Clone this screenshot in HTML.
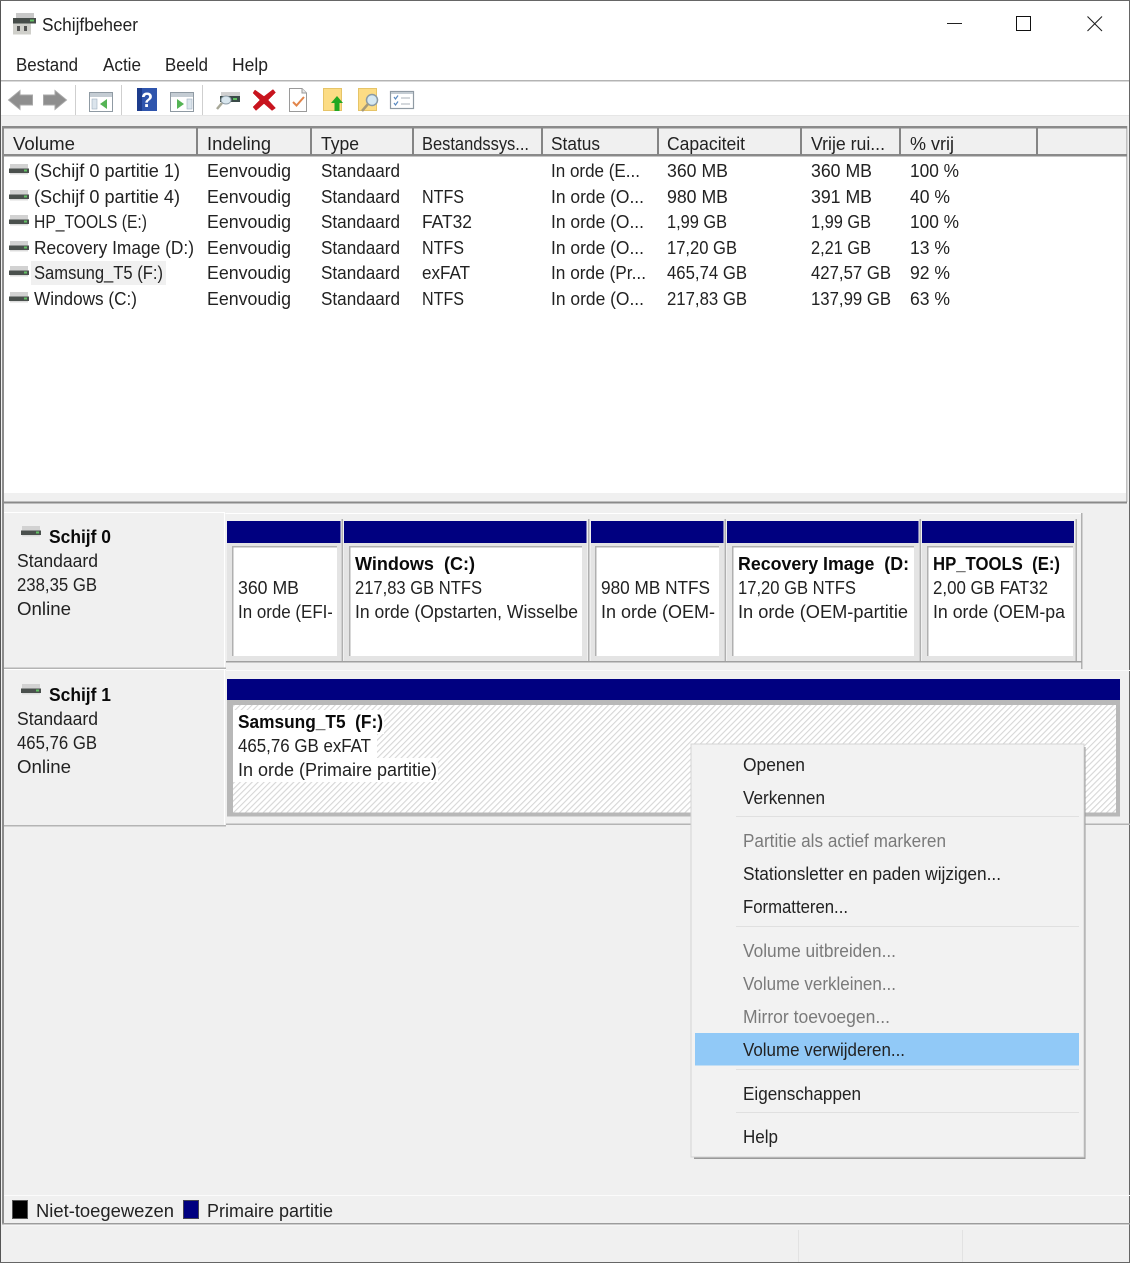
<!DOCTYPE html>
<html lang="nl"><head><meta charset="utf-8"><title>Schijfbeheer</title>
<style>
html,body{margin:0;padding:0;background:#f0f0f0;width:1130px;height:1263px;overflow:hidden}
svg{display:block}
text{font-family:"Liberation Sans",sans-serif;font-size:18px;fill:#222}
.b{font-weight:bold;fill:#0a0a0a}
.g{fill:#7a7a7a}
</style></head><body>
<svg width="1130" height="1263" viewBox="0 0 1130 1263" xmlns="http://www.w3.org/2000/svg">
<defs>
<pattern id="h" width="4.200" height="4.200" patternUnits="userSpaceOnUse" patternTransform="rotate(45)">
<rect width="4.200" height="4.200" fill="#fff"/><rect width="1.100" height="4.200" fill="#d6d6d6"/>
</pattern>
<g id="drv">
<rect x="1" y="0" width="18" height="5" fill="#d2d2d2"/>
<rect x="0" y="4.500" width="20" height="4.500" fill="#4a504d"/>
<rect x="15" y="5.500" width="3" height="2" fill="#62c064"/>
<rect x="1" y="9" width="18" height="1.500" fill="#dcdcdc"/>
</g>
<clipPath id="c1"><rect x="234" y="548" width="98" height="108"/></clipPath>
<clipPath id="c2"><rect x="351" y="548" width="227" height="108"/></clipPath>
<clipPath id="c3"><rect x="597" y="548" width="118" height="108"/></clipPath>
<clipPath id="c4"><rect x="734" y="548" width="175" height="108"/></clipPath>
<clipPath id="c5"><rect x="929" y="548" width="137" height="108"/></clipPath>
</defs>

<!-- window -->
<rect width="1130" height="1263" fill="#f0f0f0"/>
<rect width="1130" height="116" fill="#fff"/>
<rect x="0" y="80" width="1130" height="1.500" fill="#b4b4b4"/>
<rect x="0" y="115" width="1130" height="1" fill="#e6e6e6"/>

<!-- title -->
<g>
<rect x="16" y="13" width="18" height="5" fill="#c8c8c8"/>
<rect x="13" y="18" width="23" height="5.500" fill="#464c49"/>
<rect x="30" y="19.500" width="4" height="2" fill="#62c064"/>
<rect x="13" y="23.500" width="18" height="11" fill="#cfcfca"/>
<rect x="17" y="26" width="3" height="5" fill="#555"/>
<rect x="24" y="26" width="3" height="5" fill="#555"/>
</g>
<text x="42" y="31" textLength="96" lengthAdjust="spacingAndGlyphs">Schijfbeheer</text>
<rect x="947" y="23" width="15" height="1" fill="#222"/>
<rect x="1016.500" y="16.500" width="14" height="14" fill="none" stroke="#111" stroke-width="1"/>
<path d="M1087.500 16.500L1102 31M1102 16.500L1087.500 31" stroke="#222" stroke-width="1.100" fill="none"/>

<!-- menu -->
<text x="16" y="71" textLength="62" lengthAdjust="spacingAndGlyphs">Bestand</text>
<text x="103" y="71" textLength="38" lengthAdjust="spacingAndGlyphs">Actie</text>
<text x="165" y="71" textLength="43" lengthAdjust="spacingAndGlyphs">Beeld</text>
<text x="232" y="71" textLength="36" lengthAdjust="spacingAndGlyphs">Help</text>

<!-- toolbar -->
<path d="M8.500 100L20 90.500V95H32.500V105H20V109.500Z" fill="#8e8e8e" stroke="#a8a8a8"/>
<path d="M66.500 100L55 90.500V95H43.500V105H55V109.500Z" fill="#8e8e8e" stroke="#a8a8a8"/>
<rect x="75" y="85" width="1" height="30" fill="#cfcfcf"/>
<g>
<rect x="89.500" y="92.500" width="23" height="19" fill="#fff" stroke="#8f9aa3"/>
<rect x="90" y="93" width="22" height="4" fill="#c4ccd3"/>
<rect x="92" y="99" width="5" height="10" fill="#dbe4ec" stroke="#9fb0c0" stroke-width=".6"/>
<path d="M107 99V109L100 104Z" fill="#55b455"/>
</g>
<rect x="121" y="85" width="1" height="30" fill="#cfcfcf"/>
<rect x="137" y="88" width="20" height="23" fill="#2f55ad"/>
<rect x="137" y="88" width="5" height="23" fill="#1d3c8c"/>
<text x="141" y="107" style="font-size:21px;font-weight:bold;fill:#fff" textLength="12" lengthAdjust="spacingAndGlyphs">?</text>
<g>
<rect x="170.500" y="92.500" width="23" height="19" fill="#fff" stroke="#8f9aa3"/>
<rect x="171" y="93" width="22" height="4" fill="#c4ccd3"/>
<rect x="187" y="99" width="5" height="10" fill="#dbe4ec" stroke="#9fb0c0" stroke-width=".6"/>
<path d="M177 99V109L184 104Z" fill="#55b455"/>
</g>
<rect x="202" y="85" width="1" height="30" fill="#cfcfcf"/>
<g>
<rect x="221" y="92" width="19" height="4" fill="#d0d0d0"/>
<rect x="220" y="96" width="20" height="6" fill="#3a4a48"/>
<rect x="233" y="98" width="4" height="2" fill="#5fc060"/>
<ellipse cx="226" cy="100" rx="5" ry="4" fill="#d8e6ee" stroke="#8a9aa5"/>
<path d="M222 103L217 109" stroke="#a8a898" stroke-width="2.500"/>
</g>
<path d="M255 90L264 96.500L273 89.500L275.500 92.500L268 100L275.500 108L272 110.500L264 103.500L256 110.500L253 107L260 100L253 93Z" fill="#c8141e" stroke="#c8141e" stroke-width=".5"/>
<g>
<path d="M289.500 88.500H302L306.500 93V111.500H289.500Z" fill="#fff" stroke="#9a9a9a"/>
<path d="M302 88.500V93H306.500" fill="#e8e8e8" stroke="#9a9a9a"/>
<path d="M293 102L296.500 105.500L304 97" fill="none" stroke="#e2854a" stroke-width="2"/>
</g>
<g>
<rect x="323.500" y="88.500" width="18" height="22" fill="#fcdc84" stroke="#e6c468"/>
<path d="M337 96L343 103H339.500V111H334.500V103H331Z" fill="#22a822"/>
</g>
<g>
<rect x="358.500" y="88.500" width="18" height="22" fill="#fcdc84" stroke="#e6c468"/>
<circle cx="372" cy="100" r="5.500" fill="#d5e8f2" stroke="#8a9aa5" stroke-width="1.500"/>
<path d="M368 104L362 111" stroke="#a69a78" stroke-width="2.500"/>
</g>
<g>
<rect x="390.500" y="91.500" width="23" height="17" fill="#fff" stroke="#8f9aa3" stroke-width="1.200"/>
<rect x="391" y="92" width="22" height="2" fill="#c4ccd3"/>
<path d="M394 97L395.500 99L398 95.500M394 103L395.500 105L398 101.500" stroke="#5a8ac0" stroke-width="1.200" fill="none"/>
<path d="M401 98H410M401 104H410" stroke="#a8b0b8" stroke-width="1"/>
</g>

<!-- frame left -->
<rect x="2" y="126" width="2" height="1097" fill="#8c8c8c"/>
<rect x="0" y="0" width="1" height="1263" fill="#555"/>
<rect x="1129" y="0" width="1" height="1263" fill="#666"/>
<rect x="0" y="0" width="1130" height="1" fill="#666"/>
<rect x="0" y="1262" width="1130" height="1" fill="#666"/>

<!-- list -->
<rect x="4" y="156" width="1122" height="337" fill="#fff"/>
<rect x="1126" y="126" width="1.500" height="376" fill="#c0c0c0"/>
<rect x="4" y="128" width="1122" height="27" fill="#f0f0f0"/>
<rect x="3" y="126" width="1124" height="2.500" fill="#8a8a8a"/>
<text x="13" y="150" textLength="62" lengthAdjust="spacingAndGlyphs">Volume</text>
<text x="207" y="150" textLength="64" lengthAdjust="spacingAndGlyphs">Indeling</text>
<text x="321" y="150" textLength="38" lengthAdjust="spacingAndGlyphs">Type</text>
<text x="422" y="150" textLength="107" lengthAdjust="spacingAndGlyphs">Bestandssys...</text>
<text x="551" y="150" textLength="49" lengthAdjust="spacingAndGlyphs">Status</text>
<text x="667" y="150" textLength="78" lengthAdjust="spacingAndGlyphs">Capaciteit</text>
<text x="811" y="150" textLength="74" lengthAdjust="spacingAndGlyphs">Vrije rui...</text>
<text x="910" y="150" textLength="44" lengthAdjust="spacingAndGlyphs">% vrij</text>
<rect x="3" y="154" width="1124" height="2.500" fill="#8a8a8a"/>
<g fill="#858585">
<rect x="196" y="128" width="2" height="27"/><rect x="310" y="128" width="2" height="27"/><rect x="412" y="128" width="2" height="27"/><rect x="541" y="128" width="2" height="27"/><rect x="657" y="128" width="2" height="27"/><rect x="800" y="128" width="2" height="27"/><rect x="899" y="128" width="2" height="27"/><rect x="1036" y="128" width="2" height="27"/>
</g>

<rect x="31" y="261" width="135" height="24" fill="#f0f0f0"/>
<use href="#drv" x="9" y="164"/><use href="#drv" x="9" y="190"/><use href="#drv" x="9" y="215"/><use href="#drv" x="9" y="241"/><use href="#drv" x="9" y="266"/><use href="#drv" x="9" y="292"/>

<text x="34" y="177" textLength="146" lengthAdjust="spacingAndGlyphs">(Schijf 0 partitie 1)</text>
<text x="34" y="203" textLength="146" lengthAdjust="spacingAndGlyphs">(Schijf 0 partitie 4)</text>
<text x="34" y="228" textLength="113" lengthAdjust="spacingAndGlyphs">HP_TOOLS (E:)</text>
<text x="34" y="254" textLength="160" lengthAdjust="spacingAndGlyphs">Recovery Image (D:)</text>
<text x="34" y="279" textLength="129" lengthAdjust="spacingAndGlyphs">Samsung_T5 (F:)</text>
<text x="34" y="305" textLength="103" lengthAdjust="spacingAndGlyphs">Windows (C:)</text>
<g>
<text x="207" y="177" textLength="84" lengthAdjust="spacingAndGlyphs">Eenvoudig</text>
<text x="207" y="203" textLength="84" lengthAdjust="spacingAndGlyphs">Eenvoudig</text>
<text x="207" y="228" textLength="84" lengthAdjust="spacingAndGlyphs">Eenvoudig</text>
<text x="207" y="254" textLength="84" lengthAdjust="spacingAndGlyphs">Eenvoudig</text>
<text x="207" y="279" textLength="84" lengthAdjust="spacingAndGlyphs">Eenvoudig</text>
<text x="207" y="305" textLength="84" lengthAdjust="spacingAndGlyphs">Eenvoudig</text>
<text x="321" y="177" textLength="79" lengthAdjust="spacingAndGlyphs">Standaard</text>
<text x="321" y="203" textLength="79" lengthAdjust="spacingAndGlyphs">Standaard</text>
<text x="321" y="228" textLength="79" lengthAdjust="spacingAndGlyphs">Standaard</text>
<text x="321" y="254" textLength="79" lengthAdjust="spacingAndGlyphs">Standaard</text>
<text x="321" y="279" textLength="79" lengthAdjust="spacingAndGlyphs">Standaard</text>
<text x="321" y="305" textLength="79" lengthAdjust="spacingAndGlyphs">Standaard</text>
<text x="422" y="203" textLength="42" lengthAdjust="spacingAndGlyphs">NTFS</text>
<text x="422" y="228" textLength="50" lengthAdjust="spacingAndGlyphs">FAT32</text>
<text x="422" y="254" textLength="42" lengthAdjust="spacingAndGlyphs">NTFS</text>
<text x="422" y="279" textLength="48" lengthAdjust="spacingAndGlyphs">exFAT</text>
<text x="422" y="305" textLength="42" lengthAdjust="spacingAndGlyphs">NTFS</text>
<text x="551" y="177" textLength="89" lengthAdjust="spacingAndGlyphs">In orde (E...</text>
<text x="551" y="203" textLength="93" lengthAdjust="spacingAndGlyphs">In orde (O...</text>
<text x="551" y="228" textLength="93" lengthAdjust="spacingAndGlyphs">In orde (O...</text>
<text x="551" y="254" textLength="93" lengthAdjust="spacingAndGlyphs">In orde (O...</text>
<text x="551" y="279" textLength="95" lengthAdjust="spacingAndGlyphs">In orde (Pr...</text>
<text x="551" y="305" textLength="93" lengthAdjust="spacingAndGlyphs">In orde (O...</text>
<text x="667" y="177" textLength="61" lengthAdjust="spacingAndGlyphs">360 MB</text>
<text x="667" y="203" textLength="61" lengthAdjust="spacingAndGlyphs">980 MB</text>
<text x="667" y="228" textLength="60" lengthAdjust="spacingAndGlyphs">1,99 GB</text>
<text x="667" y="254" textLength="70" lengthAdjust="spacingAndGlyphs">17,20 GB</text>
<text x="667" y="279" textLength="80" lengthAdjust="spacingAndGlyphs">465,74 GB</text>
<text x="667" y="305" textLength="80" lengthAdjust="spacingAndGlyphs">217,83 GB</text>
<text x="811" y="177" textLength="61" lengthAdjust="spacingAndGlyphs">360 MB</text>
<text x="811" y="203" textLength="61" lengthAdjust="spacingAndGlyphs">391 MB</text>
<text x="811" y="228" textLength="60" lengthAdjust="spacingAndGlyphs">1,99 GB</text>
<text x="811" y="254" textLength="60" lengthAdjust="spacingAndGlyphs">2,21 GB</text>
<text x="811" y="279" textLength="80" lengthAdjust="spacingAndGlyphs">427,57 GB</text>
<text x="811" y="305" textLength="80" lengthAdjust="spacingAndGlyphs">137,99 GB</text>
<text x="910" y="177" textLength="49" lengthAdjust="spacingAndGlyphs">100 %</text>
<text x="910" y="203" textLength="40" lengthAdjust="spacingAndGlyphs">40 %</text>
<text x="910" y="228" textLength="49" lengthAdjust="spacingAndGlyphs">100 %</text>
<text x="910" y="254" textLength="40" lengthAdjust="spacingAndGlyphs">13 %</text>
<text x="910" y="279" textLength="40" lengthAdjust="spacingAndGlyphs">92 %</text>
<text x="910" y="305" textLength="40" lengthAdjust="spacingAndGlyphs">63 %</text>
</g>

<!-- splitter -->
<rect x="4" y="501.500" width="1123" height="2" fill="#8a8a8a"/>

<!-- disk 0 -->
<rect x="4" y="512" width="220" height="1" fill="#fff"/>
<rect x="224" y="512" width="1" height="157" fill="#fff"/>
<rect x="4" y="667.500" width="222" height="1.500" fill="#b4b4b4"/>
<use href="#drv" x="21" y="526"/>
<text x="49" y="543" class="b" textLength="62" lengthAdjust="spacingAndGlyphs">Schijf 0</text>
<text x="17" y="567" textLength="81" lengthAdjust="spacingAndGlyphs">Standaard</text>
<text x="17" y="591" textLength="80" lengthAdjust="spacingAndGlyphs">238,35 GB</text>
<text x="17" y="615" textLength="54" lengthAdjust="spacingAndGlyphs">Online</text>

<rect x="225.500" y="513" width="856" height="1" fill="#fff"/>
<rect x="1081" y="513" width="1.500" height="156" fill="#b0b0b0"/>
<rect x="226" y="661" width="856" height="1.500" fill="#a0a0a0"/>
<!-- partition cells -->
<g fill="#e4e4e4">
<rect x="227" y="543" width="114" height="118"/><rect x="344" y="543" width="243" height="118"/><rect x="591" y="543" width="133" height="118"/><rect x="727" y="543" width="192" height="118"/><rect x="922" y="543" width="154" height="118"/>
</g>
<g fill="#000080">
<rect x="227" y="521" width="113.500" height="22"/><rect x="344" y="521" width="242.500" height="22"/><rect x="591" y="521" width="132.500" height="22"/><rect x="727" y="521" width="191.500" height="22"/><rect x="922" y="521" width="152" height="22"/>
</g>
<g fill="#b0b0b0">
<rect x="341.500" y="519" width="1.500" height="142"/><rect x="588" y="519" width="1.500" height="142"/><rect x="724.500" y="519" width="1.500" height="142"/><rect x="919.500" y="519" width="1.500" height="142"/><rect x="1075.500" y="519" width="1.500" height="142"/>
</g>
<g fill="#fff">
<rect x="232" y="546" width="105" height="110"/><rect x="349" y="546" width="233" height="110"/><rect x="595" y="546" width="124" height="110"/><rect x="732" y="546" width="182" height="110"/><rect x="927" y="546" width="146" height="110"/>
</g>
<g fill="#b0b0b0">
<rect x="232" y="546" width="105" height="1.500"/><rect x="349" y="546" width="233" height="1.500"/><rect x="595" y="546" width="124" height="1.500"/><rect x="732" y="546" width="182" height="1.500"/><rect x="927" y="546" width="146" height="1.500"/>
<rect x="232" y="546" width="1.500" height="110"/><rect x="349" y="546" width="1.500" height="110"/><rect x="595" y="546" width="1.500" height="110"/><rect x="732" y="546" width="1.500" height="110"/><rect x="927" y="546" width="1.500" height="110"/>
</g>
<g clip-path="url(#c1)">
<text x="238" y="594" textLength="61" lengthAdjust="spacingAndGlyphs">360 MB</text>
<text x="238" y="618" textLength="95" lengthAdjust="spacingAndGlyphs">In orde (EFI-</text>
</g>
<g clip-path="url(#c2)">
<text x="355" y="570" class="b" textLength="120" lengthAdjust="spacingAndGlyphs">Windows&#160;&#160;(C:)</text>
<text x="355" y="594" textLength="127" lengthAdjust="spacingAndGlyphs">217,83 GB NTFS</text>
<text x="355" y="618" textLength="223" lengthAdjust="spacingAndGlyphs">In orde (Opstarten, Wisselbe</text>
</g>
<g clip-path="url(#c3)">
<text x="601" y="594" textLength="109" lengthAdjust="spacingAndGlyphs">980 MB NTFS</text>
<text x="601" y="618" textLength="114" lengthAdjust="spacingAndGlyphs">In orde (OEM-</text>
</g>
<g clip-path="url(#c4)">
<text x="738" y="570" class="b" textLength="171" lengthAdjust="spacingAndGlyphs">Recovery Image&#160;&#160;(D:</text>
<text x="738" y="594" textLength="118" lengthAdjust="spacingAndGlyphs">17,20 GB NTFS</text>
<text x="738" y="618" textLength="170" lengthAdjust="spacingAndGlyphs">In orde (OEM-partitie</text>
</g>
<g clip-path="url(#c5)">
<text x="933" y="570" class="b" textLength="127" lengthAdjust="spacingAndGlyphs">HP_TOOLS&#160;&#160;(E:)</text>
<text x="933" y="594" textLength="115" lengthAdjust="spacingAndGlyphs">2,00 GB FAT32</text>
<text x="933" y="618" textLength="132" lengthAdjust="spacingAndGlyphs">In orde (OEM-pa</text>
</g>

<!-- disk 1 -->
<rect x="4" y="669" width="222" height="1" fill="#fff"/>
<rect x="224" y="670" width="1" height="156" fill="#fff"/>
<rect x="4" y="825" width="222" height="1.500" fill="#b4b4b4"/>
<rect x="226" y="823.500" width="904" height="1.500" fill="#b4b4b4"/>
<use href="#drv" x="21" y="684"/>
<text x="49" y="701" class="b" textLength="62" lengthAdjust="spacingAndGlyphs">Schijf 1</text>
<text x="17" y="725" textLength="81" lengthAdjust="spacingAndGlyphs">Standaard</text>
<text x="17" y="749" textLength="80" lengthAdjust="spacingAndGlyphs">465,76 GB</text>
<text x="17" y="773" textLength="54" lengthAdjust="spacingAndGlyphs">Online</text>
<rect x="226" y="670" width="904" height="1" fill="#fafafa"/>
<rect x="227" y="679" width="893" height="21" fill="#000080"/>
<rect x="227" y="700" width="893" height="116.500" fill="#b8b8b8"/>
<rect x="233" y="705" width="883" height="107.500" fill="url(#h)"/>
<rect x="233" y="710" width="151" height="24" fill="#fff"/>
<rect x="233" y="734" width="144" height="24" fill="#fff"/>
<rect x="233" y="758" width="205" height="24" fill="#fff"/>
<text x="238" y="728" class="b" textLength="145" lengthAdjust="spacingAndGlyphs">Samsung_T5&#160;&#160;(F:)</text>
<text x="238" y="752" textLength="133" lengthAdjust="spacingAndGlyphs">465,76 GB exFAT</text>
<text x="238" y="776" textLength="199" lengthAdjust="spacingAndGlyphs">In orde (Primaire partitie)</text>

<!-- legend -->
<rect x="4" y="1195" width="1126" height="1" fill="#fbfbfb"/>
<rect x="12.500" y="1200.500" width="15" height="18" fill="#000" stroke="#555"/>
<text x="36" y="1217" textLength="138" lengthAdjust="spacingAndGlyphs">Niet-toegewezen</text>
<rect x="183.500" y="1200.500" width="15" height="18" fill="#000080" stroke="#445"/>
<text x="207" y="1217" textLength="126" lengthAdjust="spacingAndGlyphs">Primaire partitie</text>
<rect x="2" y="1223" width="1128" height="1.500" fill="#9c9c9c"/>
<rect x="4" y="1224.500" width="1125" height="1" fill="#fbfbfb"/>
<rect x="798" y="1230" width="1" height="32" fill="#e2e2e2"/>
<rect x="962" y="1230" width="1" height="32" fill="#e2e2e2"/>

<!-- context menu -->
<rect x="694" y="747" width="391.500" height="412" fill="#9a9a9a"/>
<rect x="691" y="744" width="393" height="413" fill="#f2f2f2" stroke="#d4d4d4"/>
<rect x="695" y="1033" width="384" height="32.500" fill="#91c9f7"/>
<g fill="#e0e0e0">
<rect x="736" y="816" width="343" height="1"/><rect x="736" y="926" width="343" height="1"/><rect x="736" y="1069" width="343" height="1"/><rect x="736" y="1112" width="343" height="1"/>
</g>
<text x="743" y="771" textLength="62" lengthAdjust="spacingAndGlyphs">Openen</text>
<text x="743" y="804" textLength="82" lengthAdjust="spacingAndGlyphs">Verkennen</text>
<text x="743" y="847" class="g" textLength="203" lengthAdjust="spacingAndGlyphs">Partitie als actief markeren</text>
<text x="743" y="880" textLength="258" lengthAdjust="spacingAndGlyphs">Stationsletter en paden wijzigen...</text>
<text x="743" y="913" textLength="105" lengthAdjust="spacingAndGlyphs">Formatteren...</text>
<text x="743" y="957" class="g" textLength="153" lengthAdjust="spacingAndGlyphs">Volume uitbreiden...</text>
<text x="743" y="990" class="g" textLength="153" lengthAdjust="spacingAndGlyphs">Volume verkleinen...</text>
<text x="743" y="1023" class="g" textLength="147" lengthAdjust="spacingAndGlyphs">Mirror toevoegen...</text>
<text x="743" y="1056" textLength="162" lengthAdjust="spacingAndGlyphs">Volume verwijderen...</text>
<text x="743" y="1100" textLength="118" lengthAdjust="spacingAndGlyphs">Eigenschappen</text>
<text x="743" y="1143" textLength="35" lengthAdjust="spacingAndGlyphs">Help</text>
</svg>
</body></html>
